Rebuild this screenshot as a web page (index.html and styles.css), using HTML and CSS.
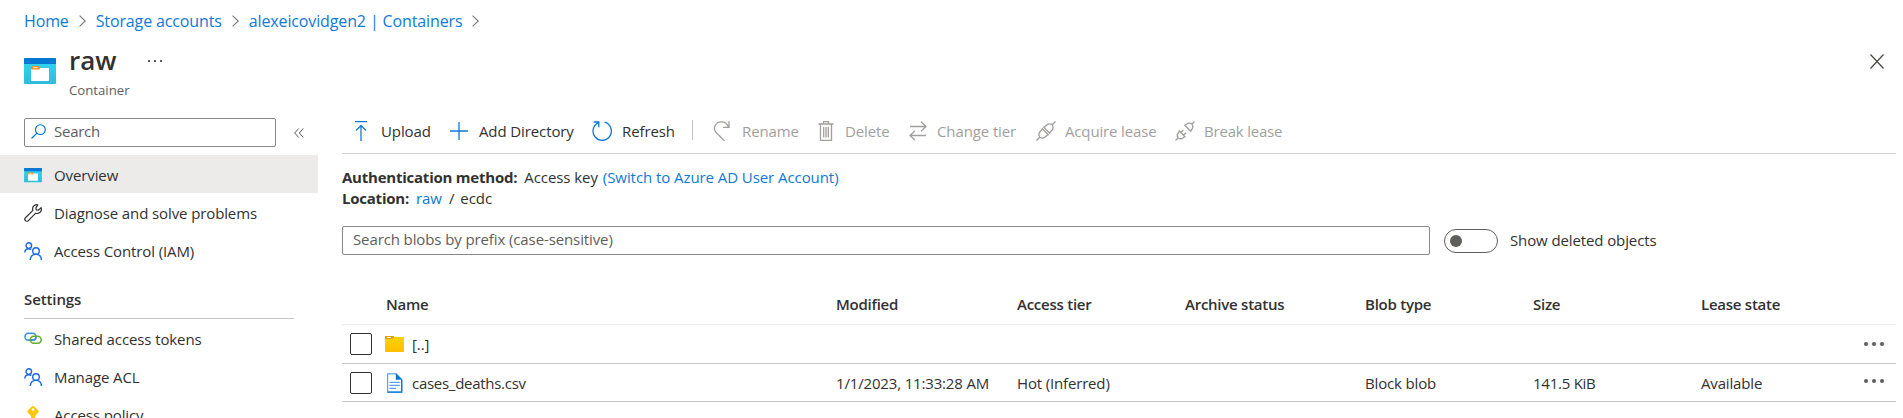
FILE: index.html
```html
<!DOCTYPE html>
<html lang="en">
<head>
<meta charset="utf-8">
<title>raw - Container</title>
<link rel="stylesheet" href="styles.css">
</head>
<body>
<svg class="defs" aria-hidden="true">
  <defs>
    <linearGradient id="cyan" x1="0" y1="0" x2="0" y2="1"><stop offset="0" stop-color="#32d8f5"/><stop offset="1" stop-color="#2fbbdc"/></linearGradient>
    <linearGradient id="gold" x1="0" y1="0" x2="0" y2="1"><stop offset="0" stop-color="#ffd400"/><stop offset="1" stop-color="#ffbd00"/></linearGradient>
    <symbol id="container" viewBox="0 0 32 26">
      <rect width="32" height="26" rx="1" fill="url(#cyan)"/>
      <path d="M1 0h30a1 1 0 0 1 1 1v5H0V1a1 1 0 0 1 1-1z" fill="#0078d4"/>
      <path d="M7 10h18v13H7z" fill="#fff"/>
      <rect x="7" y="8" width="9" height="3.4" rx="1" fill="#f78d1e"/>
      <path d="M9.500 9.700h4" stroke="#fff" stroke-width="1"/>
    </symbol>
    <symbol id="people" viewBox="0 0 18 18">
      <g fill="none" stroke="#1868e0" stroke-width="1.400">
        <circle cx="4.800" cy="3.600" r="2.800"/><path d="M.7 10.500C1 8 2.700 6.700 4.800 6.700c1 0 1.800.3 2.500.8"/>
        <circle cx="12" cy="9" r="3.300"/><path d="M6.200 18c.3-3.500 2.700-5.600 5.800-5.600s5.200 2.100 5.500 5.600"/>
      </g>
    </symbol>
  </defs>
</svg>

<nav class="crumbs">
  <a>Home</a><svg class="chev" viewBox="0 0 7 12"><path d="M.6.6 6.200 6 .6 11.400"/></svg>
  <a>Storage accounts</a><svg class="chev" viewBox="0 0 7 12"><path d="M.6.6 6.200 6 .6 11.400"/></svg>
  <a>alexeicovidgen2 | Containers</a><svg class="chev" viewBox="0 0 7 12"><path d="M.6.6 6.200 6 .6 11.400"/></svg>
</nav>

<header class="title">
  <svg class="title-icon"><use href="#container"/></svg>
  <div class="title-text"><h1>raw</h1><p>Container</p></div>
  <svg class="title-more" viewBox="0 0 14 2"><path d="M0 0h2v2H0zM6 0h2v2H6zM12 0h2v2h-2z"/></svg>
  <svg class="close" viewBox="0 0 14 15"><path d="M.5.5l13 14M13.500.5l-13 14"/></svg>
</header>

<div class="body">
  <aside class="side">
    <div class="side-top">
      <div class="find"><svg viewBox="0 0 16 16"><circle cx="10" cy="6" r="5.200"/><path d="M6.300 9.700.5 15.500"/></svg>Search</div>
      <svg class="collapse" viewBox="0 0 10 10"><path d="M4.700.5.7 5l4 4.500M9.300.5 5.300 5l4 4.500"/></svg>
    </div>
    <ul class="menu">
      <li class="active"><svg viewBox="0 -2 18 18"><use href="#container" width="18" height="14.500"/></svg><span>Overview</span></li>
      <li><svg viewBox="0 0 18 18"><path class="wrench" d="M13.800.9C11.400.1 8.600 1.800 8.600 4.600c0 .7.1 1.300.3 1.800L1.500 13.700c-2 2 .9 4.900 2.900 2.900l7.300-7.400c2.900 1.100 6-1.200 5.700-4.600l-.3-1-2.800 2.600-2-.4-.4-2z"/></svg><span>Diagnose and solve problems</span></li>
      <li><svg><use href="#people"/></svg><span>Access Control (IAM)</span></li>
    </ul>
    <h2>Settings</h2>
    <ul class="menu">
      <li><svg viewBox="0 0 18 18" fill="none" stroke-width="1.600"><rect x="1" y="3.300" width="11" height="6.800" rx="3.400" stroke="#3f8fe0"/><rect x="6.300" y="6.300" width="10.900" height="7" rx="3.500" stroke="#62b02f"/><path d="M7 10.100h2c2 0 3-1.600 3-3.200" stroke="#3f8fe0"/></svg><span>Shared access tokens</span></li>
      <li><svg><use href="#people"/></svg><span>Manage ACL</span></li>
      <li><svg viewBox="0 0 18 18"><path d="M8 .3q1-.7 2 0l4.300 4.300q.8 1 0 2L11 10v6l-2 2-2-2v-6L3.700 6.600q-.8-1 0-2z" fill="#ffc60a"/><circle cx="9" cy="3.500" r="1.300" fill="#fff"/></svg><span>Access policy</span></li>
    </ul>
  </aside>

  <main class="main">
    <div class="toolbar">
      <span class="cmd upload"><svg viewBox="0 0 20 20"><path d="M4 .7h12M10 20V4.500M5 9.500l5-5 5 5"/></svg><span>Upload</span></span>
      <span class="cmd add"><svg viewBox="0 0 20 20"><path d="M10 1v18M1 10h18"/></svg><span>Add Directory</span></span>
      <span class="cmd refresh"><svg viewBox="0 0 20 20"><path d="M12.500 1.200a9.200 9.200 0 1 1-6.300.6M1.800 1h5v5.300"/></svg><span>Refresh</span></span>
      <i class="sep"></i>
      <span class="cmd off rename"><svg viewBox="0 0 20 20"><path d="M12.500 20 4.200 11.500C.5 7.500 3 .8 9.500.8c3.500 0 5.800 2 7 5.200M17 0v6.300h-6"/></svg><span>Rename</span></span>
      <span class="cmd off delete"><svg viewBox="0 0 20 20"><path d="M2.500 3h15M4.500 3v16.300h11V3M7.500 3V.7h5V3M7.700 6v10.500M10 6v10.500M12.300 6v10.500"/></svg><span>Delete</span></span>
      <span class="cmd off tier"><svg viewBox="0 0 20 20"><path d="M2 5.500h16M13 .7l5 4.800-5 4.800M18 14.500H2M7 9.700l-5 4.800 5 4.800"/></svg><span>Change tier</span></span>
      <span class="cmd off acquire"><svg viewBox="0 0 20 20"><path d="M.5 19.500 3.800 16.200M16.200 3.800 19.500.5M5.800 7.300l6.900 6.900M7.300 5.800l6.900 6.900M6.500 8l-2.300 2.500c-1.500 1.700-1.500 4-.4 5.700 1.700 1.100 4 1.100 5.700-.4L12 13.500M8 6.500l2.500-2.300c1.700-1.500 4-1.500 5.700-.4 1.100 1.700 1.100 4-.4 5.700L13.500 12"/></svg><span>Acquire lease</span></span>
      <span class="cmd off break"><svg viewBox="0 0 20 20"><path d="M.5 19.500 3 17M17 3l2.500-2.500M3.800 9.500l6.700 6.700M5.800 11.500l2.500-2.500M8.500 14.200l2.500-2.500M4.500 10.200l-1.200 1.600c-1.300 1.700-1.300 3.500-.3 5.200 1.700 1 3.500 1 5.200-.3l1.600-1.200M9.300 3.800l6.900 6.900M10 4.500l1.500-1.300C13.200 2 15.300 2 17 3c1 1.700 1 3.800-.2 5.500L15.500 10"/></svg><span>Break lease</span></span>
    </div>

    <div class="info">
      <div><b>Authentication method:</b><span>Access key</span> <a>(Switch to Azure AD User Account)</a></div>
      <div><b>Location:</b><a>raw</a><span class="slash">/</span><span class="dir">ecdc</span></div>
    </div>

    <div class="filter">
      <div class="prefix">Search blobs by prefix (case-sensitive)</div>
      <i class="toggle"></i>
      <span class="toggle-label">Show deleted objects</span>
    </div>

    <div class="grid">
      <div class="row head"><span></span><span>Name</span><span>Modified</span><span>Access tier</span><span>Archive status</span><span>Blob type</span><span>Size</span><span>Lease state</span><span></span></div>
      <div class="row">
        <i class="box"></i>
        <span class="name"><svg viewBox="0 0 20 20"><path d="M0 2h9v3H0z" fill="#dfa100"/><path d="M0 5h7.500L9 3h10v15H0z" fill="url(#gold)"/><path d="M2 3.500h4" stroke="#fff" stroke-width="1"/></svg>[..]</span>
        <span></span><span></span><span></span><span></span><span></span><span></span>
        <svg class="dots" viewBox="0 0 20 4"><circle cx="2" cy="2" r="2"/><circle cx="10" cy="2" r="2"/><circle cx="18" cy="2" r="2"/></svg>
      </div>
      <div class="row file">
        <i class="box"></i>
        <span class="name"><svg viewBox="0 0 20 20"><path d="M2.600.8H11l5.700 5.700v12.700H2.600z" fill="#fff" stroke="#5ea0ef" stroke-width="1.200"/><path d="M2.600 19.200h14.100V7" fill="none" stroke="#0078d4" stroke-width="1.300"/><path d="M10.800.2 17.300 6.700h-6.500z" fill="#0078d4"/><path d="M4.500 9.300h10.300M4.500 12.300h10.300M4.500 15.300h6.500" stroke="#5ea0ef" stroke-width="1.300"/></svg>cases_deaths.csv</span>
        <span>1/1/2023, 11:33:28 AM</span><span>Hot (Inferred)</span><span></span><span>Block blob</span><span class="size">141.5 KiB</span><span>Available</span>
        <svg class="dots" viewBox="0 0 20 4"><circle cx="2" cy="2" r="2"/><circle cx="10" cy="2" r="2"/><circle cx="18" cy="2" r="2"/></svg>
      </div>
    </div>
  </main>
</div>
</body>
</html>
```
FILE: styles.css
```css
* { box-sizing: border-box; }
html, body { height: 418px; overflow: hidden; }
body {
  margin: 0;
  background: #fff;
  color: #323130;
  font: 15px/20px "Open Sans", "Segoe UI", sans-serif;
  letter-spacing: -0.11px;
}
h1, h2, p, ul { margin: 0; padding: 0; }
ul { list-style: none; }
a { color: #0f7ad6; }
svg { flex: none; display: block; }
.defs { position: absolute; width: 0; height: 0; }

.crumbs {
  display: flex;
  align-items: center;
  height: 42px;
  padding-left: 24px;
  font-size: 16px;
  letter-spacing: -0.13px;
}
.chev { width: 7px; height: 12px; margin: 0 10px; fill: none; stroke: #797775; stroke-width: 1.1; }

.title { display: flex; height: 65px; padding: 0 18px 0 24px; }
.title-icon { width: 32px; height: 26px; margin-top: 16px; }
.title-text { width: 92px; padding-left: 13px; }
h1 { font-size: 26px; font-weight: 600; line-height: 36px; letter-spacing: 0; }
.title-text p { margin-top: 1px; font-size: 13.2px; line-height: 22px; color: #605e5c; letter-spacing: 0; }
.title-more { width: 14px; height: 2px; margin-top: 18px; fill: #605e5c; }
.close { width: 14px; height: 15px; margin: 12px 1px 0 auto; fill: none; stroke: #484644; stroke-width: 1.2; }

.body { display: flex; }
.side { width: 318px; flex: none; }
.side-top { display: flex; align-items: flex-start; height: 48px; padding: 11px 0 0 24px; }
.find {
  display: flex;
  align-items: center;
  gap: 8px;
  width: 252px;
  height: 29px;
  padding: 0 0 3px 6px;
  border: 1px solid #8a8886;
  border-radius: 2px;
  color: #605e5c;
  letter-spacing: -0.25px;
}
.find svg { width: 15px; height: 15px; fill: none; stroke: #0078d4; stroke-width: 1.3; }
.collapse { width: 10px; height: 10px; margin: 10px 0 0 18px; fill: none; stroke: #605e5c; }
.menu li { display: flex; align-items: center; gap: 12px; height: 38px; padding-left: 24px; }
.menu svg { width: 18px; height: 18px; margin-top: 1px; }
.menu span { padding-top: 2px; }
.menu .active { background: #edebe9; }
.wrench { fill: none; stroke: #323130; stroke-width: 1.2; stroke-linejoin: round; }
h2 {
  width: 270px;
  height: 50px;
  margin-left: 24px;
  padding-top: 20px;
  border-bottom: 1px solid #c8c6c4;
  font-size: 15px;
  font-weight: 600;
  line-height: 20px;
}

.main { width: 1554px; margin-left: 24px; }
.toolbar { display: flex; align-items: center; height: 47px; padding: 0 0 0 9px; border-bottom: 1px solid #d2d0ce; }
.cmd { display: flex; align-items: center; gap: 10px; white-space: nowrap; }
.cmd > span { padding-top: 2px; }
.cmd svg { width: 20px; height: 20px; margin-top: 1px; fill: none; stroke: #0f7ad6; stroke-width: 1.3; }
.cmd.off { color: #a19f9d; }
.cmd.off svg { stroke: #a19f9d; }
.upload { width: 98px; }
.add { width: 143px; }
.refresh { width: 100px; }
.sep { width: 1px; height: 20px; background: #c8c6c4; margin-right: 19px; }
.rename { width: 104px; }
.cmd.delete { width: 92px; gap: 9px; }
.cmd.tier { width: 128px; gap: 9px; }
.cmd.acquire { width: 139px; gap: 9px; letter-spacing: -0.15px; }
.cmd.break { gap: 9px; letter-spacing: -0.2px; }

.info { padding-top: 13px; line-height: 21px; letter-spacing: -0.07px; }
.info div { display: flex; white-space: pre; }
.info b { letter-spacing: -0.23px; margin-right: 7px; }
.info a { margin-left: 5px; }
.info div + div a { margin-left: 0; }
.slash { margin: 0 6px 0 7px; }

.filter { display: flex; align-items: center; height: 29px; margin-top: 17px; }
.prefix { width: 1088px; height: 29px; padding: 1px 10px; border: 1px solid #8a8886; border-radius: 2px; color: #605e5c; line-height: 22px; }
.toggle { width: 54px; height: 24px; margin: 0 12px 0 14px; padding: 5px; border: 1px solid #605e5c; border-radius: 12px; }
.toggle::before { content: ""; display: block; width: 12px; height: 12px; border-radius: 50%; background: #605e5c; }
.toggle-label { padding-bottom: 2px; }

.grid { margin-top: 29px; }
.row {
  display: grid;
  grid-template-columns: 35px 451px 181px 168px 180px 168px 168px 163px 20px;
  align-items: center;
  height: 39px;
  padding: 0 0 0 8px;
  border-bottom: 1px solid #c8c6c4;
  white-space: nowrap;
}
.head { height: 41px; border-bottom-color: #edebe9; font-weight: 600; letter-spacing: -0.25px; }
.head span:nth-child(2) { padding-left: 1px; }
.file { height: 38px; letter-spacing: -0.16px; }
.box { width: 22px; height: 22px; border: 1px solid #323130; border-radius: 2px; }
.name { display: flex; align-items: center; gap: 7px; }
.file .name { letter-spacing: -0.28px; }
.size { letter-spacing: -0.25px; }
.name svg { width: 20px; height: 20px; }
.dots { width: 20px; height: 4px; fill: #605e5c; }
.file .dots { margin-bottom: 3px; }
```
